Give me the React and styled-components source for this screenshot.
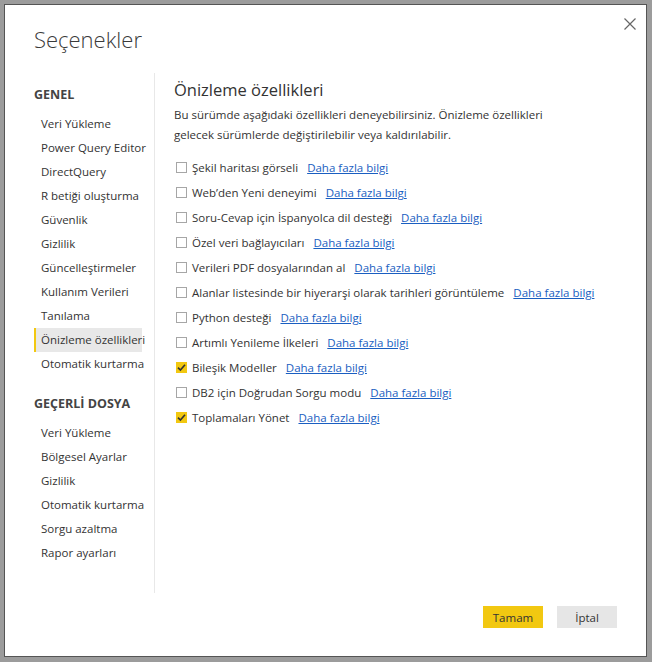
import React from 'react'
import styled, { createGlobalStyle } from 'styled-components'

const GlobalStyle = createGlobalStyle`
	html, body {
		margin: 0;
		padding: 0;
		background: #9c9c9c;
	}
	body {
		font-family: "Open Sans", "Noto Sans", sans-serif;
		color: #333;
	}
`

const Frame = styled.div`
	box-sizing: border-box;
	width: 652px;
	height: 662px;
	padding: 4px 5px 5px 4px;
`

const Dialog = styled.div`
	position: relative;
	box-sizing: border-box;
	height: 100%;
	background: white;
	border: 1px solid #555;
	display: flex;
	flex-direction: column;
`

const Close = styled.button`
	position: absolute;
	top: 7px;
	right: 4px;
	width: 24px;
	height: 24px;
	padding: 0;
	border: none;
	background: none;
	display: flex;
	align-items: center;
	justify-content: center;
`

const Title = styled.h1`
	margin: 0;
	height: 68px;
	box-sizing: border-box;
	padding: 17px 0 0 29px;
	font-size: 22px;
	line-height: 34px;
	font-weight: 300;
	color: #3a3a3a;
`

const Body = styled.div`
	flex: 1;
	display: flex;
	min-height: 0;
`

const Sidebar = styled.nav`
	width: 150px;
	box-sizing: border-box;
	padding: 12px 12px 0 29px;
	border-right: 1px solid #e8e8e8;
`

const SectionTitle = styled.div`
	font-size: 12.5px;
	line-height: 20px;
	font-weight: 700;
	color: #444;
	margin: ${p => (p.$first ? '0' : '18px')} 0 7px;
`

const NavItem = styled.div`
	box-sizing: border-box;
	height: 24px;
	line-height: 24px;
	padding-left: 5px;
	font-size: 11.5px;
	color: #333;
	white-space: nowrap;
	background: ${p => (p.$active ? '#e8e8e8' : 'transparent')};
	border-left: 2px solid ${p => (p.$active ? '#f2c811' : 'transparent')};
`

const Content = styled.main`
	flex: 1;
	padding: 5px 0 0 19px;
`

const Heading = styled.h2`
	margin: 0;
	font-size: 16.5px;
	line-height: 24px;
	font-weight: 400;
	color: #333;
`

const Description = styled.p`
	margin: 3px 0 10px;
	font-size: 11.5px;
	line-height: 20px;
	color: #333;
	width: 372px;
`

const Row = styled.label`
	display: flex;
	align-items: center;
	height: 25px;
	font-size: 11.5px;
	color: #333;
	white-space: nowrap;
`

const Box = styled.span`
	box-sizing: border-box;
	width: 11px;
	height: 11px;
	margin: 0 5px 0 2px;
	border: 1px solid ${p => (p.$checked ? '#f2c811' : '#a6a6a6')};
	background: ${p => (p.$checked ? '#f2c811' : 'white')};
	display: flex;
	align-items: center;
	justify-content: center;
`

const Link = styled.a`
	margin-left: 9px;
	color: #1a5ec1;
	text-decoration: underline;
	cursor: pointer;
`

const Footer = styled.footer`
	display: flex;
	justify-content: flex-end;
	gap: 14px;
	padding: 13px 29px 28px 0;
`

const Button = styled.button`
	width: 60px;
	height: 22px;
	border: none;
	padding: 0;
	font-family: inherit;
	font-size: 11.5px;
	color: #333;
	background: ${p => (p.$primary ? '#f2c811' : '#e6e6e6')};
`

const general = [
	'Veri Yükleme',
	'Power Query Editor',
	'DirectQuery',
	'R betiği oluşturma',
	'Güvenlik',
	'Gizlilik',
	'Güncelleştirmeler',
	'Kullanım Verileri',
	'Tanılama',
	'Önizleme özellikleri',
	'Otomatik kurtarma',
]

const currentFile = [
	'Veri Yükleme',
	'Bölgesel Ayarlar',
	'Gizlilik',
	'Otomatik kurtarma',
	'Sorgu azaltma',
	'Rapor ayarları',
]

const features = [
	{ label: 'Şekil haritası görseli' },
	{ label: 'Web’den Yeni deneyimi' },
	{ label: 'Soru-Cevap için İspanyolca dil desteği' },
	{ label: 'Özel veri bağlayıcıları' },
	{ label: 'Verileri PDF dosyalarından al' },
	{ label: 'Alanlar listesinde bir hiyerarşi olarak tarihleri görüntüleme' },
	{ label: 'Python desteği' },
	{ label: 'Artımlı Yenileme İlkeleri' },
	{ label: 'Bileşik Modeller', checked: true },
	{ label: 'DB2 için Doğrudan Sorgu modu' },
	{ label: 'Toplamaları Yönet', checked: true },
]

const Check = () => (
	<svg width="9" height="9" viewBox="0 0 9 9">
		<path d="M1 4.6 L3.4 7 L8 1.8" fill="none" stroke="#333" strokeWidth="1.6" />
	</svg>
)

const App = () => {
	return (
		<>
			<GlobalStyle />
			<Frame>
				<Dialog>
					<Close aria-label="Kapat">
						<svg width="12" height="12" viewBox="0 0 12 12">
							<path d="M0.5 0.5 L11.5 11.5 M11.5 0.5 L0.5 11.5" stroke="#666" strokeWidth="1.2" />
						</svg>
					</Close>
					<Title>Seçenekler</Title>
					<Body>
						<Sidebar>
							<SectionTitle $first>GENEL</SectionTitle>
							{general.map(item => (
								<NavItem key={item} $active={item === 'Önizleme özellikleri'}>{item}</NavItem>
							))}
							<SectionTitle>GEÇERLİ DOSYA</SectionTitle>
							{currentFile.map(item => (
								<NavItem key={item}>{item}</NavItem>
							))}
						</Sidebar>
						<Content>
							<Heading>Önizleme özellikleri</Heading>
							<Description>
								Bu sürümde aşağıdaki özellikleri deneyebilirsiniz. Önizleme özellikleri gelecek sürümlerde değiştirilebilir veya kaldırılabilir.
							</Description>
							{features.map(f => (
								<Row key={f.label}>
									<Box $checked={f.checked}>{f.checked && <Check />}</Box>
									{f.label}
									<Link>Daha fazla bilgi</Link>
								</Row>
							))}
						</Content>
					</Body>
					<Footer>
						<Button $primary>Tamam</Button>
						<Button>İptal</Button>
					</Footer>
				</Dialog>
			</Frame>
		</>
	)
}

export default App
